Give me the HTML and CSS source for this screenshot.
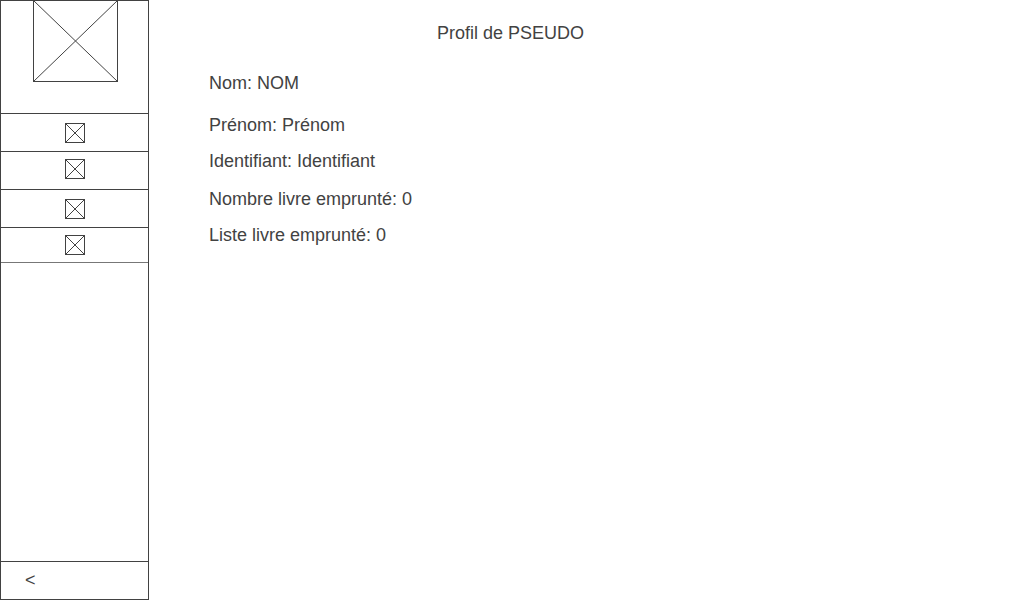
FILE: index.html
```html
<!DOCTYPE html>
<html lang="fr">
<head>
  <meta charset="utf-8">
  <meta name="viewport" content="width=device-width, initial-scale=1">
  <title>Profil de PSEUDO</title>
  <link rel="stylesheet" href="styles.css">
</head>
<body>
  <div class="app">
    <aside class="sidebar">
      <div class="brand">
        <svg class="logo" viewBox="0 0 85 82" aria-hidden="true"><rect x="0.5" y="0.5" width="84" height="81"/><path d="M0.5 0.5L84.5 81.5M84.5 0.5L0.5 81.5"/></svg>
      </div>
      <nav class="menu">
        <button class="menu-item" type="button" aria-label="Menu 1"><svg class="icon" viewBox="0 0 20 20" aria-hidden="true"><rect x="0.5" y="0.5" width="19" height="19"/><path d="M0.5 0.5L19.5 19.5M19.5 0.5L0.5 19.5"/></svg></button>
        <button class="menu-item" type="button" aria-label="Menu 2"><svg class="icon" viewBox="0 0 20 20" aria-hidden="true"><rect x="0.5" y="0.5" width="19" height="19"/><path d="M0.5 0.5L19.5 19.5M19.5 0.5L0.5 19.5"/></svg></button>
        <button class="menu-item" type="button" aria-label="Menu 3"><svg class="icon" viewBox="0 0 20 20" aria-hidden="true"><rect x="0.5" y="0.5" width="19" height="19"/><path d="M0.5 0.5L19.5 19.5M19.5 0.5L0.5 19.5"/></svg></button>
        <button class="menu-item" type="button" aria-label="Menu 4"><svg class="icon" viewBox="0 0 20 20" aria-hidden="true"><rect x="0.5" y="0.5" width="19" height="19"/><path d="M0.5 0.5L19.5 19.5M19.5 0.5L0.5 19.5"/></svg></button>
      </nav>
      <button class="collapse" type="button">&lt;</button>
    </aside>
    <main class="content">
      <div class="profile">
        <h1 class="title">Profil de PSEUDO</h1>
        <p class="field field-name">Nom: NOM</p>
        <p class="field field-firstname">Prénom: Prénom</p>
        <p class="field">Identifiant: Identifiant</p>
        <p class="field field-count">Nombre livre emprunté: 0</p>
        <p class="field">Liste livre emprunté: 0</p>
      </div>
    </main>
  </div>
</body>
</html>
```

FILE: styles.css
```css
:root {
  --ink: #424242;
}

* {
  box-sizing: border-box;
}

body {
  margin: 0;
  background: #fff;
  color: var(--ink);
  font: 18px/20px "Liberation Sans", Arial, sans-serif;
}

.app {
  display: flex;
  min-height: 100vh;
}

.sidebar {
  display: flex;
  flex: 0 0 149px;
  flex-direction: column;
  border: 1px solid var(--ink);
}

/* The logo shares the sidebar's top border */
.brand {
  display: flex;
  justify-content: center;
  margin-top: -1px;
  padding: 0 0 31px 2px;
  border-bottom: 1px solid var(--ink);
}

.logo,
.icon {
  display: block;
  fill: none;
  stroke: var(--ink);
  stroke-width: 1;
}

.logo {
  width: 85px;
  height: 82px;
}

.icon {
  width: 20px;
  height: 20px;
}

.logo rect,
.icon rect {
  shape-rendering: crispEdges;
}

.menu {
  display: flex;
  flex-direction: column;
}

.menu-item {
  display: flex;
  justify-content: center;
  padding: 9px 0 8px 1px;
  border: 0;
  border-bottom: 1px solid var(--ink);
  background: none;
}

.menu-item:nth-child(even) {
  padding: 7px 0 10px 1px;
}

.menu-item:last-child {
  padding-bottom: 7px;
  border-bottom-color: #777;
}

.collapse {
  margin-top: auto;
  padding: 8px 24px 9px;
  border: 0;
  border-top: 1px solid var(--ink);
  background: none;
  color: inherit;
  font: inherit;
  text-align: left;
}

.content {
  flex: 1;
  padding: 23px 60px;
}

.profile {
  max-width: 603px;
}

.title {
  margin: 0 0 30px;
  font: inherit;
  text-align: center;
}

.field {
  margin: 0 0 16px;
}

.field-name {
  margin-bottom: 22px;
}

.field-firstname {
  margin-bottom: 16px;
}

.field-count {
  margin-top: 18px;
}
```
